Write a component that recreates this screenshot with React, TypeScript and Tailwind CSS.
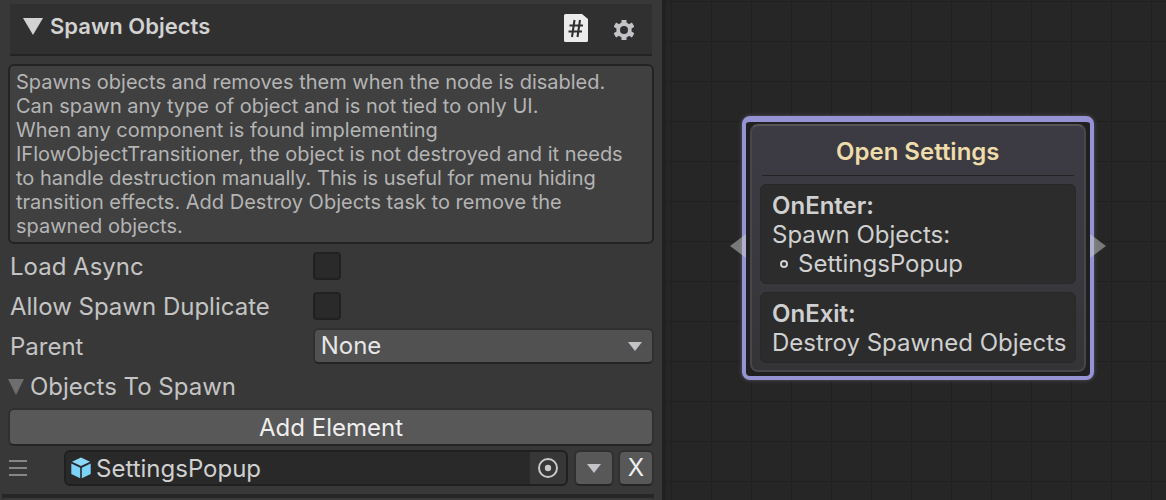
import { useState } from 'react'

// ─── Data ─────────────────────────────────────────────────────────────────────

const DESCRIPTION = [
  'Spawns objects and removes them when the node is disabled.',
  'Can spawn any type of object and is not tied to only UI.',
  'When any component is found implementing',
  'IFlowObjectTransitioner, the object is not destroyed and it needs',
  'to handle destruction manually. This is useful for menu hiding',
  'transition effects. Add Destroy Objects task to remove the',
  'spawned objects.',
].join('\n')

const NODE_SECTIONS = [
  { title: 'OnEnter:', lines: ['Spawn Objects:'], items: ['SettingsPopup'] },
  { title: 'OnExit:', lines: ['Destroy Spawned Objects'], items: [] },
]

// ─── Icons ────────────────────────────────────────────────────────────────────

function Triangle({ className }: { className: string }) {
  return (
    <svg viewBox="0 0 20 17" preserveAspectRatio="none" className={className} aria-hidden="true">
      <path d="M0 0h20L10 17z" fill="currentColor" />
    </svg>
  )
}

function ScriptIcon() {
  return (
    <svg viewBox="0 0 24 28" className="h-7 w-6" aria-hidden="true">
      <path d="M1.5 0H18l6 5v21.500a1.500 1.500 0 0 1-1.500 1.500h-21A1.500 1.500 0 0 1 0 26.500v-25A1.500 1.500 0 0 1 1.500 0z" fill="#ececec" />
      <path d="M10.500 6 8 23M16 6l-2.500 17M5.500 11.500h13.500M4.500 17.500H18" stroke="#303030" strokeWidth="2.100" fill="none" />
    </svg>
  )
}

function GearIcon() {
  return (
    <svg viewBox="0 0 20 20" className="size-5" aria-hidden="true">
      <g stroke="#c4c4c8" strokeWidth="5">
        <path d="M10 0v20M.800 4.700l18.400 10.600M19.200 4.700.800 15.300" />
      </g>
      <circle cx="10" cy="10" r="7.700" fill="#c4c4c8" />
      <circle cx="10" cy="10" r="4" fill="#303030" />
    </svg>
  )
}

function PrefabIcon() {
  return (
    <svg viewBox="0 0 20 22" className="h-[22px] w-5 shrink-0" aria-hidden="true">
      <path d="M10 .5 19 4.700 10 9 1 4.700z" fill="#8ad9fb" />
      <path d="M.3 6.500 9.200 10.700V21.300L.3 17z" fill="#7bd3fa" />
      <path d="M19.700 6.500 10.800 10.700V21.300l8.900-4.300z" fill="#7bd3fa" />
    </svg>
  )
}

function PickerIcon() {
  return (
    <svg viewBox="0 0 20 20" className="size-5" aria-hidden="true">
      <circle cx="10" cy="10" r="9" fill="none" stroke="#c8c8c8" strokeWidth="2" />
      <circle cx="10" cy="10" r="3.200" fill="#c8c8c8" />
    </svg>
  )
}

// ─── Inspector ────────────────────────────────────────────────────────────────

function CheckRow({ id, label }: { id: string; label: string }) {
  const [checked, setChecked] = useState(false)
  return (
    <div className="flex h-10 items-center pl-0.5">
      <label htmlFor={id} className="w-[47%] pt-0.5">{label}</label>
      <input
        id={id}
        type="checkbox"
        checked={checked}
        onChange={e => setChecked(e.target.checked)}
        className="size-7 appearance-none rounded border-2 border-[#212121] bg-[#2a2a2a] checked:bg-[#c4c4c4]"
      />
    </div>
  )
}

const buttonCls =
  'flex items-center justify-center rounded-md border-2 border-[#303030] border-b-[#242424] bg-[#585858] text-[#eeeeee]'

function Inspector() {
  const [open, setOpen] = useState(true)
  return (
    <section className="bg-[#383838] px-2 pt-1 text-[#c4c4c4]">
      <header className="mx-0.5 flex h-[52px] items-center border-b-2 border-[#242424] bg-[#303030] pr-[18px] pl-[13px]">
        <button className="flex items-center gap-[7px] pb-1.5 text-[22px] font-semibold text-[#d2d2d2]">
          <Triangle className="h-[17px] w-5" />
          Spawn Objects
        </button>
        <button aria-label="Open script" className="ml-auto pb-0.5">
          <ScriptIcon />
        </button>
        <button aria-label="Settings" className="ml-[26px] pt-0.5">
          <GearIcon />
        </button>
      </header>

      <p className="mt-2 rounded-md border-2 border-[#232323] bg-[#404040] px-1.5 py-1 text-[20px] leading-6 whitespace-pre-line text-[#b4b4b4]">
        {DESCRIPTION}
      </p>

      <div className="mt-0.5">
        <CheckRow id="load-async" label="Load Async" />
        <CheckRow id="allow-duplicate" label="Allow Spawn Duplicate" />
        <div className="flex h-10 items-center pl-0.5">
          <label htmlFor="parent" className="w-[47%] pt-0.5">Parent</label>
          <div className="relative flex-1">
            <select
              id="parent"
              className="block h-9 w-full appearance-none rounded-md border-2 border-[#303030] border-b-[#242424] bg-[#515151] pl-1.5 text-[#e6e6e6]"
            >
              <option>None</option>
            </select>
            <Triangle className="pointer-events-none absolute top-3.5 right-3 h-[9px] w-3.5 text-[#c4c4c8]" />
          </div>
        </div>
        <button onClick={() => setOpen(!open)} className="flex h-10 items-center gap-1.5 pt-0.5">
          <Triangle className="h-4 w-4 text-[#6e6e6e]" />
          Objects To Spawn
        </button>
      </div>

      {open && (
        <>
          <button className={`${buttonCls} mt-0.5 h-[38px] w-full pt-0.5`}>Add Element</button>
          <div className="mt-1 flex h-9">
            <div className="flex w-14 flex-col justify-center gap-[5px] pl-px">
              <span className="h-0.5 w-[18px] bg-[#878787]" />
              <span className="h-0.5 w-[18px] bg-[#878787]" />
              <span className="h-0.5 w-[18px] bg-[#878787]" />
            </div>
            <div className="flex flex-1 items-center overflow-hidden rounded-md border-2 border-[#202020] bg-[#292929] pl-[5px]">
              <PrefabIcon />
              <input
                aria-label="Object"
                defaultValue="SettingsPopup"
                className="min-w-0 flex-1 bg-transparent pt-0.5 pl-[5px] text-[#d0d0d0] outline-none"
              />
              <button aria-label="Pick object" className="flex h-full w-9 items-center justify-center bg-[#373737]">
                <PickerIcon />
              </button>
            </div>
            <button aria-label="More options" className={`${buttonCls} ml-1.5 w-10`}>
              <Triangle className="h-[9px] w-3.5 text-[#c4c4c8]" />
            </button>
            <button aria-label="Remove" className={`${buttonCls} ml-1 w-9`}>X</button>
          </div>
          <div className="mt-2 -ml-1.5 h-1 bg-[#262626]" />
        </>
      )}
    </section>
  )
}

// ─── Graph ────────────────────────────────────────────────────────────────────

function FlowNode() {
  return (
    <article className="absolute top-[116px] left-[76px] rounded-lg border-4 border-t-[6px] border-[#9593d3] bg-[#202020] p-1 pt-0.5 text-[#d0d0d0] shadow-[0_0_4px_#555566]">
      <svg viewBox="0 0 16 24" className="absolute top-28 -left-4 h-6 w-4" aria-hidden="true">
        <path d="M0 12 16 0v24z" fill="#cccccc" fillOpacity=".5" />
      </svg>
      <svg viewBox="0 0 16 24" className="absolute top-28 -right-4 h-6 w-4" aria-hidden="true">
        <path d="M16 12 0 0v24z" fill="#cccccc" fillOpacity=".5" />
      </svg>
      <div className="rounded-lg border-2 border-[#46464b] border-t-[#555557] bg-linear-to-b from-[#3c3a42] via-[#3a3940] to-[#343436] px-2 pb-[7px]">
        <h2 className="mx-0.5 border-b border-[#222222] pt-2.5 pb-[7px] text-center leading-8 font-semibold text-[#eedcaa]">
          Open Settings
        </h2>
        <div className="mt-2 flex flex-col gap-2">
          {NODE_SECTIONS.map(section => (
            <div
              key={section.title}
              className="rounded-md border border-[#282828] bg-[#2c2c2c] pt-1.5 pr-2 pb-[5px] pl-[11px] leading-[29px]"
            >
              <h3 className="font-semibold">{section.title}</h3>
              {section.lines.map(line => (
                <p key={line}>{line}</p>
              ))}
              <ul>
                {section.items.map(item => (
                  <li key={item} className="flex items-center pl-2">
                    <span className="mr-2.5 size-2 rounded-full border-2 border-[#d0d0d0]" />
                    {item}
                  </li>
                ))}
              </ul>
            </div>
          ))}
        </div>
      </div>
    </article>
  )
}

export default function App() {
  return (
    <main className="grid min-h-screen grid-cols-[662fr_504fr] overflow-hidden bg-[#383838] font-['Inter',sans-serif] text-[24px] leading-8 [font-optical-sizing:none]">
      <Inspector />
      <section className="relative border-l-4 border-[#212121] bg-[#262626] bg-[linear-gradient(to_right,#202020_1px,transparent_1px),linear-gradient(to_bottom,#202020_1px,transparent_1px)] bg-[size:40px_40px] bg-[position:5px_1px]">
        <FlowNode />
      </section>
    </main>
  )
}
